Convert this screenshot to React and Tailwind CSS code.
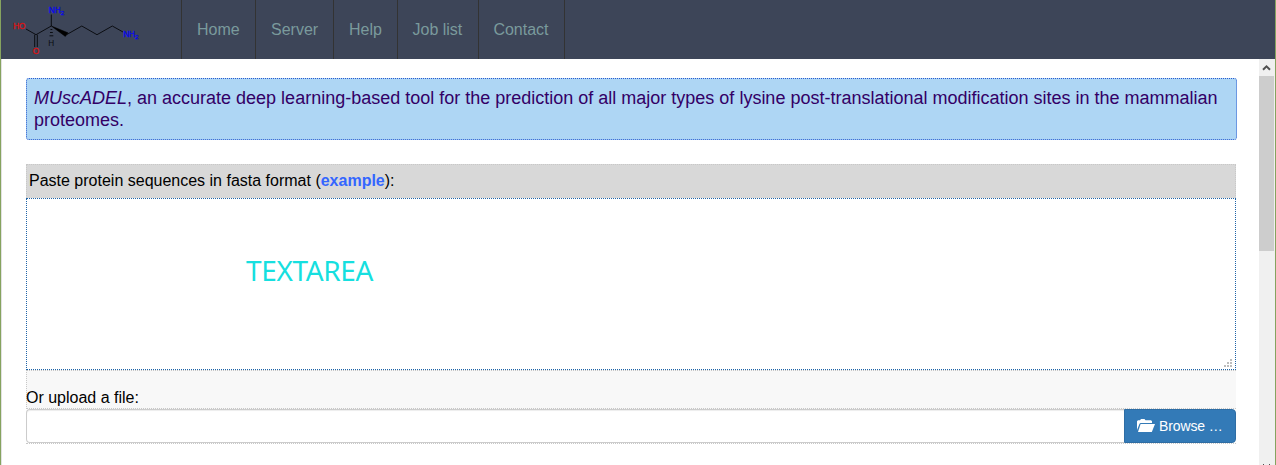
import React from 'react';

const links = [
  ['Home', 'w-[74px] pl-[15px]'],
  ['Server', 'w-[78px] pl-[15px]'],
  ['Help', 'w-[64px] pl-[15px]'],
  ['Job list', 'w-[81px] pl-[14.5px]'],
  ['Contact', 'w-[86px] pl-[14.4px]'],
];

function LysineLogo() {
  return (
    <svg className="block h-[59px] w-[180px] shrink-0" viewBox="1 0 180 59" fontFamily="Liberation Sans, Arial, sans-serif" fontSize="8.2">
      <g fill="none" stroke="#0b0d12" strokeWidth="1">
        <path d="M51.3 14.5V26L36 34.7L26 29M66.5 34.7L81.8 26L97 34.7L112.3 26L123 32" />
        <path d="M34.7 34.7V47M37.3 34.7V47" />
        <path d="M50.5 29.5H52.3M50 32.5H52.8M49.5 35.8H53.3" />
      </g>
      <path d="M51.3 26L68 32.8L65.3 36.4Z" fill="#000" stroke="#000" strokeWidth="0.5" />
      <g fill="#0808ee" stroke="#0808ee" strokeWidth="0.3">
        <text x="48.8" y="13">NH<tspan fontSize="6.2" dy="1.8">2</tspan></text>
        <text x="123.2" y="36.9">NH<tspan fontSize="6.2" dy="1.8">2</tspan></text>
      </g>
      <g fill="#dc1212" stroke="#dc1212" strokeWidth="0.3">
        <text x="13.2" y="29">HO</text>
        <text x="32.8" y="54.3">O</text>
      </g>
      <text x="48.3" y="45.5" fill="#0b0d12">H</text>
    </svg>
  );
}

function Scrollbar() {
  return (
    <div className="flex w-[16px] shrink-0 flex-col bg-[#f0f0f0] pr-px">
      <div className="flex h-[17px] items-center justify-center">
        <svg className="h-[7px] w-[9px]" viewBox="0 0 9 7">
          <path d="M1 5.7L4.5 2.3L8 5.7" fill="none" stroke="#505050" strokeWidth="2" />
        </svg>
      </div>
      <div className="h-[175px] bg-[#cdcdcd]" />
      <div className="mt-auto flex justify-between px-[4px]">
        <span className="h-px w-px bg-[#505050]" />
        <span className="h-px w-px bg-[#505050]" />
      </div>
    </div>
  );
}

export default function App() {
  return (
    <div className="flex h-[465px] w-[1276px] flex-col overflow-hidden border-x border-[#86a35f] bg-white font-['Liberation_Sans',Arial,sans-serif] text-black">
      <nav className="flex h-[59px] shrink-0 bg-[#3d4558]">
        <LysineLogo />
        <div className="flex border-l border-[#333333]">
          {links.map(([name, box]) => (
            <a key={name} href="#" className={`${box} flex h-[59px] shrink-0 items-center whitespace-nowrap border-r border-[#333333] text-[16px] text-[#7a9a9c]`}>
              {name}
            </a>
          ))}
        </div>
      </nav>
      <div className="flex min-h-0 flex-1 border-l border-[#e2e2e2]">
        <main className="min-w-0 flex-1 pl-[24px] pt-[19px]">
          <p className="h-[62px] w-[1211px] rounded-[3px] border border-dotted border-[#2a5bd0] bg-[#aed6f4] px-[7px] pt-[8px] text-[18px] leading-[22px] text-[#330066]">
            <em>MUscADEL</em>, an accurate deep learning-based tool for the prediction of all major types of lysine post-translational modification sites in the mammalian proteomes.
          </p>
          <div className="mt-[24px] w-[1210px]">
            <div className="h-[34px] border border-b-0 border-dotted border-[#c8c8c8] bg-[#d8d8d8] pl-[2px] text-[16px] leading-[32px]">
              Paste protein sequences in fasta format (<a href="#" className="font-bold text-[#3366ff]">example</a>):
            </div>
            <div className="flex h-[172px] justify-between border border-dotted border-[#1f64a8] bg-white">
              <span className="ml-[219px] mt-[52px] font-['Noto_Sans',sans-serif] text-[28px] leading-[38px] tracking-[-0.35px] text-[#16dfdf]">TEXTAREA</span>
              <svg className="mb-[2px] mr-[3px] h-[8px] w-[8px] self-end" viewBox="0 0 8 8" fill="#bdbdbd">
                <path d="M6 0h2v2H6zM3 3h2v2H3zM6 3h2v2H6zM0 6h2v2H0zM3 6h2v2H3zM6 6h2v2H6z" />
              </svg>
            </div>
            <div className="h-[39px] border-y border-l border-dotted border-[#c8c8c8] bg-[#f8f8f8] pt-[17px] text-[16px] leading-[20px]">
              <span className="-ml-px">Or upload a file:</span>
            </div>
            <div className="flex h-[35px] border-b border-dotted border-[#c8c8c8]">
              <div className="h-[34px] flex-1 rounded-l-[4px] border border-r-0 border-[#cccccc] bg-white shadow-[inset_0_1px_1px_rgba(0,0,0,0.075)]" />
              <button className="flex h-[34px] w-[112px] items-center rounded-r-[4px] border border-[#2e6da4] bg-[#337ab7] pl-[12px] text-[14px] text-white">
                <svg className="mr-[4px] h-[14px] w-[18px]" viewBox="0 0 18 14" fill="currentColor">
                  <path d="M0 11V2.2L1 1.2H3L4 0H7.5L8.5 1.2H14L15 2.2V4H3.5L2.5 4.7Z" />
                  <path d="M3.6 5H18L14.8 13H1Z" />
                </svg>
                <span className="tracking-[-0.12px]">Browse …</span>
              </button>
            </div>
          </div>
        </main>
        <Scrollbar />
      </div>
    </div>
  );
}
